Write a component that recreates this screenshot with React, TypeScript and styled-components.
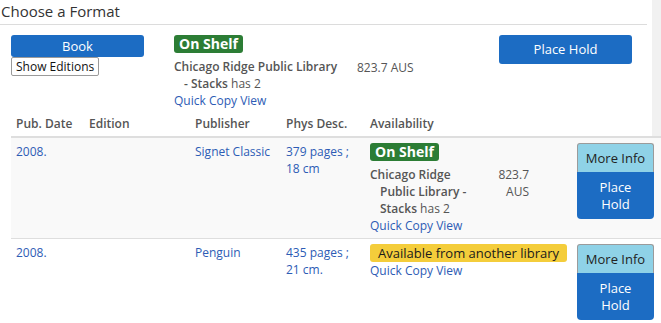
import React from 'react';
import styled, { createGlobalStyle } from 'styled-components';

const GlobalStyle = createGlobalStyle`
  html, body {
    margin: 0;
    padding: 0;
    background: #f1f1f1;
    font-family: 'Open Sans', 'Noto Sans', sans-serif;
    font-size: 12px;
    color: #555;
  }
`;

const Page = styled.div`
  width: 652px;
  min-height: 323px;
  background: #ffffff;
  overflow: visible;
`;

const Heading = styled.h2`
  margin: 0;
  width: 646px;
  padding: 0 0 2px 1px;
  font-size: 15px;
  font-weight: 400;
  line-height: 22px;
  color: #333;
  border-bottom: 1px solid #dcdcdc;
`;

const FormatRow = styled.div`
  display: flex;
  align-items: flex-start;
  padding: 10px 0 0 11px;
`;

const FormatCol = styled.div`
  display: flex;
  flex-direction: column;
  align-items: flex-start;
  width: 133px;
  margin-right: 30px;
`;

const BlueButton = styled.button<{ $h?: number }>`
  display: block;
  width: 133px;
  height: ${(p) => p.$h ?? 22}px;
  border: 0;
  border-radius: 3px;
  background: #1c6cc3;
  color: #fff;
  font-family: inherit;
  font-size: 13px;
  line-height: 17px;
  padding: 0;
  cursor: pointer;
`;

const PlainButton = styled.button`
  display: block;
  height: 19px;
  padding: 0 4px;
  border: 1px solid #9a9a9a;
  border-radius: 2px;
  background: #fff;
  color: #111;
  font-family: inherit;
  font-size: 12px;
  line-height: 16px;
`;

const StatusCol = styled.div<{ $w: number }>`
  width: ${(p) => p.$w}px;
  flex-shrink: 0;
`;

const Badge = styled.span<{ $tone: 'green' | 'yellow' }>`
  display: inline-block;
  padding: 0 ${(p) => (p.$tone === 'green' ? 5 : 8)}px;
  height: 18px;
  line-height: 18px;
  border-radius: 3px;
  white-space: nowrap;
  font-size: ${(p) => (p.$tone === 'green' ? 14 : 13)}px;
  font-weight: ${(p) => (p.$tone === 'green' ? 700 : 400)};
  background: ${(p) => (p.$tone === 'green' ? '#2c7d35' : '#f4cd3b')};
  color: ${(p) => (p.$tone === 'green' ? '#fff' : '#1a1a1a')};
`;

const Availability = styled.div`
  display: flex;
  align-items: flex-start;
  margin-top: 5px;
`;

const Location = styled.div<{ $w: number }>`
  width: ${(p) => p.$w}px;
  padding-left: 10px;
  text-indent: -10px;
  line-height: 17px;
  color: #555;
  b {
    font-weight: 600;
  }
`;

const CallNumber = styled.div<{ $w: number }>`
  width: ${(p) => p.$w}px;
  line-height: 17px;
  color: #555;
  font-weight: 500;
  text-align: right;
`;

const Link = styled.a`
  display: block;
  color: #2d5cb5;
  text-decoration: none;
  line-height: 17px;
`;

const CallCol = styled.div`
  width: 142px;
  padding-top: 24px;
  line-height: 17px;
  color: #555;
`;

const Table = styled.div`
  margin: 1px 0 0 11px;
  width: 661px;
`;

const Row = styled.div<{ $alt?: boolean; $head?: boolean }>`
  display: grid;
  grid-template-columns: 73px 106px 91px 84px 207px 1fr;
  background: ${(p) => (p.$head ? 'transparent' : p.$alt ? '#f9f9f9' : '#ffffff')};
  border-bottom: ${(p) => (p.$head ? '2px' : '1px')} solid #dedede;
  margin-right: -11px;
`;

const HeadCell = styled.div`
  padding: 5px 5px 4px;
  font-weight: 600;
  color: #555;
  line-height: 17px;
`;

const Cell = styled.div`
  padding: 5px;
  line-height: 17px;
  color: #2d5cb5;
`;

const AvailCell = styled.div`
  padding: 5px 5px 4px;
`;

const ActionGroup = styled.div`
  width: 77px;
  display: flex;
  flex-direction: column;
`;

const MoreInfo = styled.button`
  height: 29px;
  border: 1px solid #9b9b9b;
  border-bottom: 0;
  border-radius: 3px 3px 0 0;
  background: #8fd2e7;
  color: #222;
  font-family: inherit;
  font-size: 13px;
  padding: 0;
`;

const StackHold = styled.button`
  height: 47px;
  border: 0;
  border-radius: 0 0 4px 4px;
  background: #1c6cc3;
  color: #fff;
  font-family: inherit;
  font-size: 13px;
  line-height: 17px;
  padding: 0 14px;
`;

type Edition = {
  date: string;
  publisher: string;
  pages: string;
  size: string;
  onShelf: boolean;
};

const editions: Edition[] = [
  { date: '2008.', publisher: 'Signet Classic', pages: '379 pages ;', size: '18 cm', onShelf: true },
  { date: '2008.', publisher: 'Penguin', pages: '435 pages ;', size: '21 cm.', onShelf: false },
];

const App: React.FC = () => {
  return (
    <>
      <GlobalStyle />
      <Page>
        <Heading>Choose a Format</Heading>
        <FormatRow>
          <FormatCol>
            <BlueButton>Book</BlueButton>
            <PlainButton>Show Editions</PlainButton>
          </FormatCol>
          <StatusCol $w={183}>
            <Badge $tone="green">On Shelf</Badge>
            <Availability>
              <Location $w={160}>
                <b>Chicago Ridge Public Library - Stacks</b> has 2
              </Location>
            </Availability>
            <Link href="#">Quick Copy View</Link>
          </StatusCol>
          <CallCol>823.7 AUS</CallCol>
          <BlueButton $h={29}>Place Hold</BlueButton>
        </FormatRow>
        <Table>
          <Row $head>
            <HeadCell>Pub. Date</HeadCell>
            <HeadCell>Edition</HeadCell>
            <HeadCell>Publisher</HeadCell>
            <HeadCell>Phys Desc.</HeadCell>
            <HeadCell>Availability</HeadCell>
            <HeadCell />
          </Row>
          {editions.map((ed, i) => (
            <Row key={i} $alt={i % 2 === 0}>
              <Cell>{ed.date}</Cell>
              <Cell />
              <Cell>{ed.publisher}</Cell>
              <Cell>
                {ed.pages}
                <br />
                {ed.size}
              </Cell>
              <AvailCell>
                {ed.onShelf ? (
                  <>
                    <Badge $tone="green">On Shelf</Badge>
                    <Availability>
                      <Location $w={108}>
                        <b>Chicago Ridge Public Library - Stacks</b> has 2
                      </Location>
                      <CallNumber $w={41}>
                        823.7
                        <br />
                        AUS
                      </CallNumber>
                    </Availability>
                  </>
                ) : (
                  <Badge $tone="yellow">Available from another library</Badge>
                )}
                <Link href="#">Quick Copy View</Link>
              </AvailCell>
              <AvailCell>
                <ActionGroup>
                  <MoreInfo>More Info</MoreInfo>
                  <StackHold>Place Hold</StackHold>
                </ActionGroup>
              </AvailCell>
            </Row>
          ))}
        </Table>
      </Page>
    </>
  );
};

export default App;
